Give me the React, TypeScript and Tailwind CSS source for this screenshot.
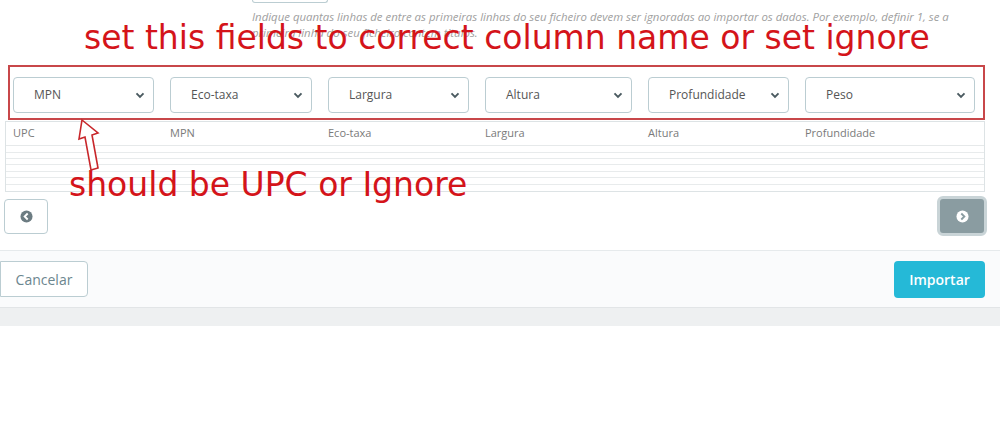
import React from "react";

const cols = ["UPC", "MPN", "Eco-taxa", "Largura", "Altura", "Profundidade"];
const selects = ["MPN", "Eco-taxa", "Largura", "Altura", "Profundidade", "Peso"];
const gridCols = "grid grid-cols-[157px_158px_157px_163px_157px_188px]";

function Chevron() {
  return (
    <svg width="10" height="7" viewBox="0 0 11 8" className="shrink-0">
      <path d="M1.5 1.5 L5.5 5.5 L9.5 1.5" fill="none" stroke="#4a5a60" strokeWidth="2.2" />
    </svg>
  );
}

function CircleChevron({ dir, circle, chev }: { dir: "l" | "r"; circle: string; chev: string }) {
  return (
    <svg width="13" height="13" viewBox="0 0 14 14">
      <circle cx="7" cy="7" r="6.5" fill={circle} />
      {dir === "l" ? (
        <path d="M8.3 3.8 L5 7 L8.3 10.2" fill="none" stroke={chev} strokeWidth="2" />
      ) : (
        <path d="M5.7 3.8 L9 7 L5.7 10.2" fill="none" stroke={chev} strokeWidth="2" />
      )}
    </svg>
  );
}

export default function App() {
  const rowHeights = ["h-[7px]", "h-[6px]", "h-[6px]", "h-[7px]", "h-[6px]", "h-[7px]", "h-[6px]"];
  return (
    <div className="relative w-[1000px] h-[441px] bg-white overflow-hidden font-['Open_Sans',sans-serif]">
      {/* panel body */}
      <div className="bg-white">
        <div className="ml-[252px] w-[76px] h-[3px] border border-t-0 border-[#bbcdd2] rounded-b-[4px]" />
        <p className="ml-[252px] mt-[6px] w-[740px] text-[11.4px] leading-[16px] italic text-[#a0a0a0]">
          Indique quantas linhas de entre as primeiras linhas do seu ficheiro devem ser ignoradas ao importar os dados. Por exemplo, definir 1, se a primeira linha do seu ficheiro contem titulos.
        </p>

        {/* mapping table */}
        <div className="mt-[26px] ml-[5px] w-[980px]">
          <div className={`${gridCols} h-[54px] pt-[10px]`}>
            {selects.map((s, i) => (
              <div key={s} className={i === 5 ? "pl-[8px] pr-[10px]" : "px-[8px]"}>
                <div className="h-[36px] flex items-center justify-between pl-[20px] pr-[8px] bg-white border border-[#bbcdd2] rounded-[4px] text-[12px] text-[#555]">
                  <span>{s}</span>
                  <Chevron />
                </div>
              </div>
            ))}
          </div>
          <div className="border border-[#dde3e5]">
            <div className={`${gridCols} h-[24px] items-center border-b border-[#e6e9ea] text-[11px] text-[#7a7a7a]`}>
              {cols.map((c) => (
                <div key={c} className="pl-[7px]">{c}</div>
              ))}
            </div>
            {rowHeights.map((h, i) => (
              <div key={i} className={`${h} border-b border-[#e8ebec] last:border-b-0`} />
            ))}
          </div>
        </div>

        {/* pagination */}
        <div className="flex justify-between items-center pl-[4px] pr-[13px] mt-[4px] h-[40px]">
          <button className="w-[44px] h-[35px] flex items-center justify-center bg-white border border-[#bbcdd2] rounded-[4px]">
            <CircleChevron dir="l" circle="#6c7c82" chev="#ffffff" />
          </button>
          <button className="w-[50px] h-[40px] flex items-center justify-center bg-[#8a9ca1] border-[3px] border-[#c9d4d7] rounded-[6px]">
            <CircleChevron dir="r" circle="#ffffff" chev="#8a9ca1" />
          </button>
        </div>
      </div>

      {/* footer */}
      <div className="mt-[14px] h-[58px] bg-[#fafbfc] border-t border-[#e6eaec] border-b border-b-[#e2e5e7] flex items-center justify-between pr-[15px]">
        <button className="h-[36px] w-[88px] bg-white border border-[#bbcdd2] rounded-r-[4px] text-[14px] text-[#6c868e]">
          Cancelar
        </button>
        <button className="h-[37px] w-[91px] bg-[#25b9d7] rounded-[4px] text-[14px] font-semibold text-white">
          Importar
        </button>
      </div>
      <div className="h-[18px] bg-[#eef0f1]" />

      {/* annotations */}
      <div className="absolute left-[8px] top-[65px] w-[977px] h-[55px] border-2 border-[#c8474a] pointer-events-none" />
      <div className="absolute left-[84px] top-[18px] text-[33px] leading-[40px] text-[#d4141a] font-['DejaVu_Sans',sans-serif] whitespace-nowrap">
        set this fields to correct column name or set ignore
      </div>
      <div className="absolute left-[69px] top-[165px] text-[33px] leading-[40px] text-[#d4141a] font-['DejaVu_Sans',sans-serif] whitespace-nowrap">
        should be UPC or Ignore
      </div>
      <svg className="absolute left-[68px] top-[116px]" width="40" height="60" viewBox="0 0 40 60">
        <path
          d="M14 4 L30 17 L24 19 L30 52 L23 54 L17 21 L11 23 Z"
          fill="#ffffff"
          stroke="#c8272b"
          strokeWidth="1.6"
          strokeLinejoin="miter"
        />
      </svg>
    </div>
  );
}
